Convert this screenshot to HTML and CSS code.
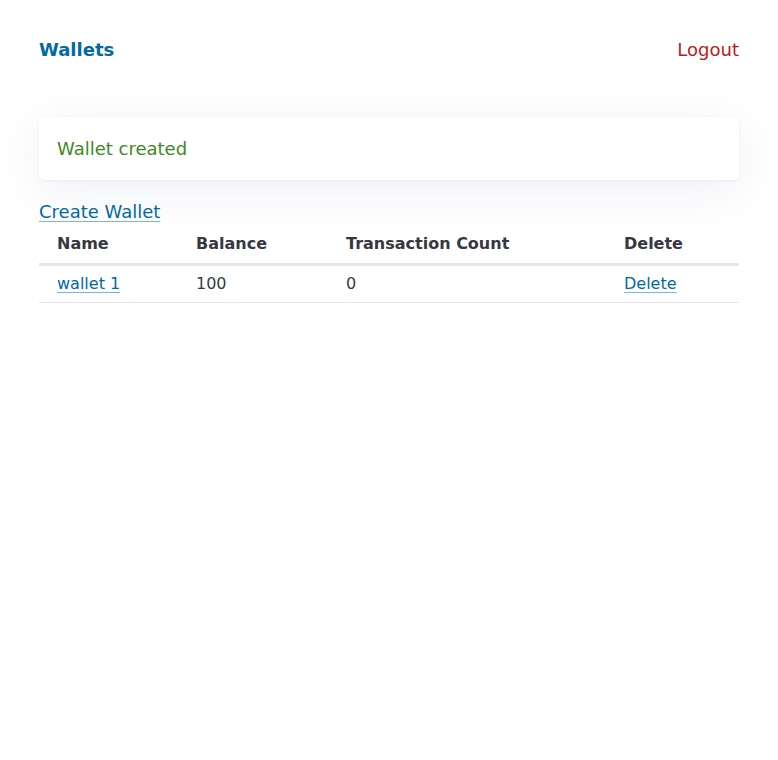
FILE: index.html
```html
<!DOCTYPE html>
<html lang="en">
<head>
<meta charset="utf-8">
<title>Wallets</title>
<link rel="stylesheet" href="styles.css">
</head>
<body>
<main class="container">
  <header class="topbar">
    <a class="brand" href="#">Wallets</a>
    <a class="logout" href="#">Logout</a>
  </header>
  <div class="notice">Wallet created</div>
  <a class="create-link" href="#">Create Wallet</a>
  <table class="wallets">
    <colgroup>
      <col class="c-name">
      <col class="c-balance">
      <col class="c-count">
      <col class="c-delete">
    </colgroup>
    <thead>
      <tr>
        <th>Name</th>
        <th>Balance</th>
        <th>Transaction Count</th>
        <th>Delete</th>
      </tr>
    </thead>
    <tbody>
      <tr>
        <td><a class="link" href="#">wallet 1</a></td>
        <td>100</td>
        <td>0</td>
        <td><a class="link" href="#">Delete</a></td>
      </tr>
    </tbody>
  </table>
</main>
</body>
</html>
```

FILE: styles.css
```css
html, body {
  margin: 0;
  padding: 0;
  background: #ffffff;
}

body {
  font-family: "DejaVu Sans", sans-serif;
  font-size: 18px;
  line-height: 1.5;
  color: #374151;
}

.container {
  max-width: 700px;
  margin: 0 auto;
  padding-top: 36px;
}

.topbar {
  display: flex;
  justify-content: space-between;
  align-items: center;
  line-height: 27px;
  margin-bottom: 54px;
}

.brand {
  font-weight: bold;
  color: #0369a1;
  text-decoration: none;
}

.logout {
  color: #b91c1c;
  text-decoration: none;
}

.notice {
  background: #ffffff;
  border-radius: 5px;
  padding: 18px;
  color: #3f8a1f;
  box-shadow: 0 1px 3px rgba(20, 30, 80, 0.06), 0 10px 50px rgba(30, 40, 110, 0.07);
}

.create-link {
  display: inline-block;
  margin-top: 18px;
  color: #0369a1;
  text-decoration: underline;
  text-decoration-color: #7ab6d8;
  text-underline-offset: 3px;
}

.wallets {
  width: 100%;
  table-layout: fixed;
  border-collapse: collapse;
  background: #ffffff;
  font-size: 16px;
  line-height: 24px;
}

.c-name { width: 139px; }
.c-balance { width: 150px; }
.c-count { width: 278px; }
.c-delete { width: 133px; }

.wallets th {
  text-align: left;
  font-weight: bold;
  color: #36373f;
  padding: 7px 18px;
  border-bottom: 3px solid #e4e6ee;
}

.wallets td {
  padding: 6px 18px;
  border-bottom: 1px solid #e6e8ee;
  color: #3a3a44;
}

.link {
  color: #0369a1;
  text-decoration: underline;
  text-decoration-color: #7ab6d8;
  text-underline-offset: 3px;
}
```
